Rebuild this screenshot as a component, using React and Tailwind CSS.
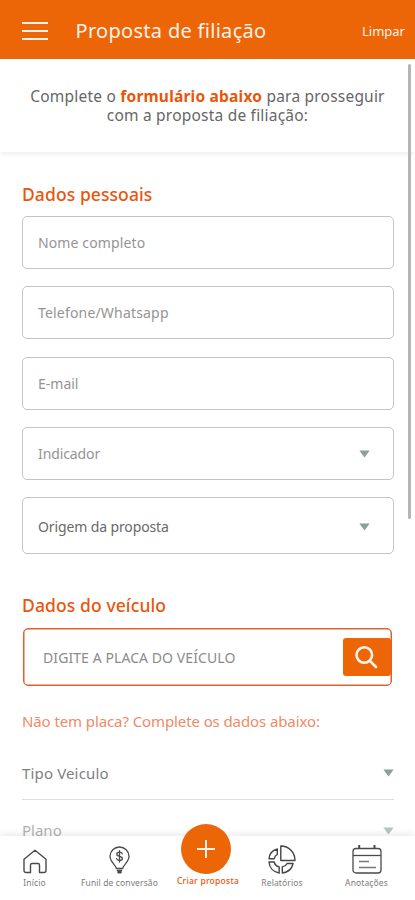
import React from "react";

function Caret({ className = "" }) {
  return (
    <svg width="11" height="8" viewBox="0 0 11 8" className={className}>
      <path d="M0.3 0.5h10.4L5.5 7.6z" fill="#8aa09c" />
    </svg>
  );
}

function Field({ label, labelClass, boxClass = "h-[53px]", select = false }) {
  return (
    <div className={`flex items-center justify-between rounded-[5px] border border-[#c4c4c4] pl-[15px] pr-[23px] ${boxClass}`}>
      <span className={`whitespace-nowrap text-[14px] leading-5 ${labelClass}`}>{label}</span>
      {select && <Caret />}
    </div>
  );
}

function HomeIcon() {
  return (
    <svg width="24" height="25" viewBox="0 0 24 25" fill="none" stroke="#4a4a4a" strokeWidth="1.4" strokeLinejoin="round">
      <path d="M1 10.2 12 1.2l11 9V21.500a2 2 0 0 1-2 2h-4.500v-7.500a1.500 1.500 0 0 0-1.500-1.500H9a1.500 1.500 0 0 0-1.500 1.500v7.500H3a2 2 0 0 1-2-2z" />
    </svg>
  );
}

function BulbIcon() {
  return (
    <svg width="21" height="28" viewBox="0 0 21 28" fill="none" stroke="#4a4a4a" strokeWidth="1.300" strokeLinecap="round" strokeLinejoin="round">
      <path d="M7.300 22.500C7 19 1 16 1 10.200a9.500 9.200 0 0 1 19 0C20 16 14 19 13.700 22.500z" />
      <path d="M13.200 7.800c-.3-1-1.300-1.600-2.700-1.600-1.600 0-2.700.8-2.700 2 0 2.900 5.500 1.300 5.500 4.200 0 1.200-1.200 2-2.800 2-1.500 0-2.600-.7-2.900-1.800M10.500 4.600v11.400" />
      <path d="M8.600 24.600h3.800M9.200 26.500h2.600" strokeWidth="1.800" />
    </svg>
  );
}

function ReportIcon() {
  return (
    <svg width="28" height="29" viewBox="0 0 28 29" fill="none" stroke="#454545" strokeWidth="1.400" strokeLinejoin="round">
      <path d="M12.800 1v14.500H27C27 7.500 21 1 12.800 1z" />
      <path d="M9.300 4v5.400c-1.700.9-2.700 2.300-3.100 4.300H1C1.400 9 4.500 5.300 9.300 4z" />
      <path d="M1 17h5.200c.5 2.600 2.300 4.300 5 4.900V28C5.500 27 1.400 22.800 1 17z" />
      <path d="M14.300 21.900c2.300-.5 4-1.700 4.800-3.400h6c-1.200 5.200-5.200 8.800-10.800 9.500z" />
    </svg>
  );
}

function NotesIcon() {
  return (
    <svg width="30" height="29" viewBox="0 0 30 29" fill="none" stroke="#4a4a4a" strokeWidth="1.300">
      <rect x="1" y="3.500" width="28" height="24.500" rx="3" />
      <path d="M1 10.500h28" />
      <path d="M7.200 0v3.500M22.500 0v3.500" strokeWidth="2" />
      <path d="M7 16.500h10M7 22.500h17" stroke="#777" />
    </svg>
  );
}

function Tab({ width, label, children }) {
  return (
    <div className={`flex flex-col items-center ${width}`}>
      <div className="flex h-[40px] items-end justify-center pb-[2px]">{children}</div>
      <span className="mt-[1px] whitespace-nowrap text-[8.500px] leading-[11px] tracking-[0.120px] text-[#7b7b7b]">{label}</span>
    </div>
  );
}

export default function App() {
  return (
    <div className="flex h-[900px] w-[415px] flex-col overflow-hidden bg-white font-['Noto_Sans','Open_Sans',sans-serif]">
      <header className="flex h-[59px] shrink-0 items-center bg-[#ec6608] pl-[22px] pr-[10px] pt-[2px] text-[#fff1e8]">
        <div className="flex w-[26px] flex-col gap-[6px]">
          <span className="h-[2px] bg-[#fff1e8]" />
          <span className="h-[2px] bg-[#fff1e8]" />
          <span className="h-[2px] bg-[#fff1e8]" />
        </div>
        <h1 className="ml-[27.500px] whitespace-nowrap text-[20px] leading-7 tracking-[0.300px]">Proposta de filiação</h1>
        <span className="ml-auto whitespace-nowrap text-[13px] leading-5">Limpar</span>
      </header>

      <main className="relative min-h-0 flex-1 overflow-hidden">
        <section className="h-[93px] pt-[28px] text-center text-[15.500px] leading-[19px] tracking-[0.210px] text-[#666] shadow-[0_2px_4px_rgba(0,0,0,0.07)]">
          <p className="whitespace-nowrap">
            Complete o <b className="font-bold text-[#ea550c]">formulário abaixo</b> para prosseguir
          </p>
          <p className="whitespace-nowrap">com a proposta de filiação:</p>
        </section>

        <section className="px-[22px] pt-[30px]">
          <h2 className="whitespace-nowrap text-[17.500px] font-medium leading-6 tracking-[0.080px] text-[#ea550c]">Dados pessoais</h2>
          <div className="mt-[10px] flex w-[372px] flex-col gap-[17px]">
            <Field label="Nome completo" labelClass="text-[#949494] tracking-[0.120px]" />
            <Field label="Telefone/Whatsapp" labelClass="text-[#949494] tracking-[0.180px]" />
            <Field label="E-mail" labelClass="text-[#949494]" boxClass="mt-[1px] h-[53px]" />
            <Field label="Indicador" labelClass="text-[#949494] -tracking-[0.100px]" select />
            <Field label="Origem da proposta" labelClass="text-[#696969] -tracking-[0.120px]" boxClass="h-[57px] pt-[2px]" select />
          </div>
        </section>

        <section className="px-[22px] pt-[39px]">
          <h2 className="whitespace-nowrap text-[17.500px] font-medium leading-6 tracking-[0.100px] text-[#ea550c]">Dados do veículo</h2>
          <div className="ml-[1px] mt-[11px] flex h-[58px] w-[369px] items-center justify-between rounded-[5px] border-[1.500px] border-[#e3602c] pl-[19px] ring-[0.500px] ring-inset ring-[#e3602c]">
            <span className="whitespace-nowrap text-[14px] tracking-[0.080px] text-[#8b8b8b]">DIGITE A PLACA DO VEÍCULO</span>
            <button className="flex h-[38px] w-[48px] items-center justify-center rounded-[3px] bg-[#ec6608]">
              <svg width="24" height="24" viewBox="0 0 24 24" fill="none" stroke="#fff3ea" strokeWidth="2.600" strokeLinecap="round" className="-ml-[2px]">
                <circle cx="10.300" cy="10" r="7.800" />
                <path d="M16 16l6 6" />
              </svg>
            </button>
          </div>
          <p className="mt-[23px] whitespace-nowrap text-[15px] leading-6 -tracking-[0.100px] text-[#f08a66]">Não tem placa? Complete os dados abaixo:</p>
          <div className="mt-[14px] flex h-[53px] w-[372px] items-center justify-between border-b border-[#dedede]">
            <span className="whitespace-nowrap text-[15px] tracking-[0.150px] text-[#808080]">Tipo Veiculo</span>
            <Caret />
          </div>
          <div className="mt-[19px] flex h-[20px] w-[372px] items-start justify-between opacity-60">
            <span className="whitespace-nowrap text-[15px] leading-[22px] text-[#808080]">Plano</span>
            <Caret className="mt-[8px]" />
          </div>
        </section>

        <div className="absolute right-[4px] top-[5px] h-[455px] w-[3px] rounded-full bg-[#b5b5b5]" />
      </main>

      <nav className="relative flex h-[64px] shrink-0 bg-white shadow-[0_-3px_6px_rgba(0,0,0,0.07)]">
        <Tab width="w-[69px]" label="Início"><HomeIcon /></Tab>
        <Tab width="w-[101px]" label="Funil de conversão"><BulbIcon /></Tab>
        <div className="flex w-[72px] flex-col items-center">
          <div className="-mt-[12px] flex h-[50px] w-[50px] shrink-0 items-center justify-center rounded-full bg-[#ec6608]">
            <svg width="20" height="20" viewBox="0 0 20 20" stroke="#fff3ea" strokeWidth="2">
              <path d="M10 1v18M1 10h18" />
            </svg>
          </div>
          <span className="ml-[4px] mt-[1px] whitespace-nowrap text-[8.500px] font-medium leading-[11px] tracking-[0.250px] text-[#ea550c]">Criar proposta</span>
        </div>
        <Tab width="w-[80px]" label="Relatórios"><ReportIcon /></Tab>
        <Tab width="w-[89px]" label="Anotações"><NotesIcon /></Tab>
      </nav>
    </div>
  );
}
